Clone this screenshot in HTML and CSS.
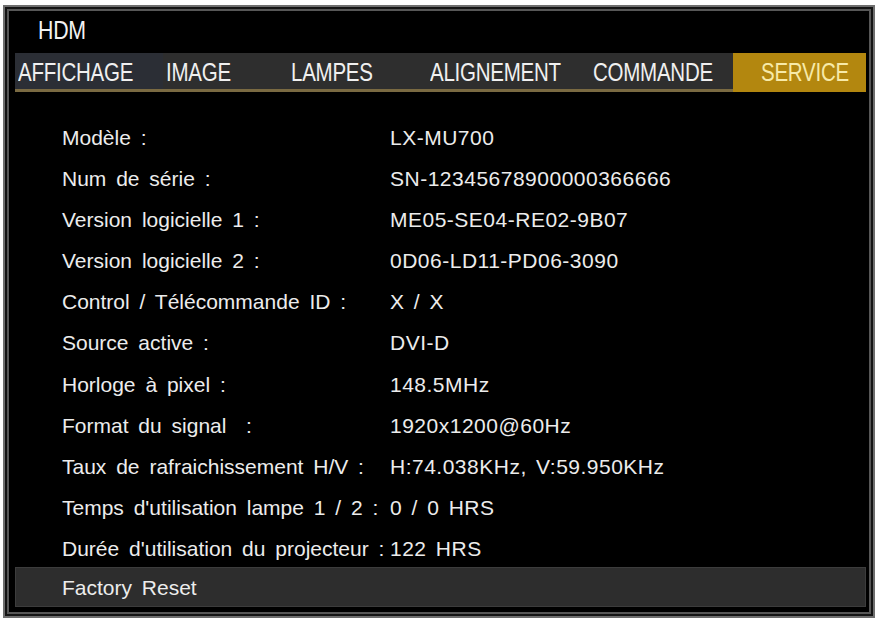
FILE: index.html
```html
<!DOCTYPE html>
<html lang="fr">
<head>
<meta charset="utf-8">
<title>SERVICE</title>
<link rel="stylesheet" href="styles.css">
</head>
<body>
<div class="frame">
  <div class="screen">
    <div class="header"><span class="narrow">HDM</span></div>
    <div class="tabs">
      <div class="tab t1"><span class="narrow">AFFICHAGE</span></div>
      <div class="tab t2"><span class="narrow">IMAGE</span></div>
      <div class="tab t3"><span class="narrow">LAMPES</span></div>
      <div class="tab t4"><span class="narrow">ALIGNEMENT</span></div>
      <div class="tab t5"><span class="narrow">COMMANDE</span></div>
      <div class="tab t6 active"><span class="narrow">SERVICE</span></div>
    </div>
    <div class="list">
      <div class="row"><span class="label">Modèle :</span><span class="value">LX-MU700</span></div>
      <div class="row"><span class="label">Num de série :</span><span class="value">SN-12345678900000366666</span></div>
      <div class="row"><span class="label">Version logicielle 1 :</span><span class="value">ME05-SE04-RE02-9B07</span></div>
      <div class="row"><span class="label">Version logicielle 2 :</span><span class="value">0D06-LD11-PD06-3090</span></div>
      <div class="row"><span class="label">Control / Télécommande ID :</span><span class="value">X / X</span></div>
      <div class="row"><span class="label">Source active :</span><span class="value">DVI-D</span></div>
      <div class="row"><span class="label">Horloge à pixel :</span><span class="value">148.5MHz</span></div>
      <div class="row"><span class="label">Format du signal &nbsp;:</span><span class="value">1920x1200@60Hz</span></div>
      <div class="row"><span class="label">Taux de rafraichissement H/V :</span><span class="value">H:74.038KHz, V:59.950KHz</span></div>
      <div class="row"><span class="label">Temps d'utilisation lampe 1 / 2 :</span><span class="value">0 / 0 HRS</span></div>
      <div class="row"><span class="label">Durée d'utilisation du projecteur :</span><span class="value">122 HRS</span></div>
    </div>
    <div class="reset">Factory Reset</div>
  </div>
</div>
</body>
</html>
```
FILE: styles.css
```css
html, body {
  margin: 0;
  padding: 0;
  background: #ffffff;
}

.frame {
  box-sizing: border-box;
  margin: 5px 0 0 3px;
  width: 872px;
  height: 613px;
  border: 2px solid #6e6e6e;
  padding: 2px;
  background: #141414;
}

.screen {
  box-sizing: border-box;
  height: 100%;
  border: 2px solid #575757;
  background: #000000;
  color: #ececec;
  font-family: "Liberation Sans", Arial, sans-serif;
  overflow: hidden;
}

.narrow {
  display: inline-block;
  transform: scaleX(0.82);
  transform-origin: left center;
  letter-spacing: -0.3px;
}

.header {
  height: 42px;
  padding-left: 29px;
  font-size: 26px;
  line-height: 38px;
  color: #f2f2f2;
  white-space: nowrap;
}

.tabs {
  display: flex;
  margin-left: 6px;
  width: 851px;
  height: 39px;
}

.tab {
  box-sizing: border-box;
  height: 39px;
  padding-left: 3px;
  padding-top: 3px;
  background: #2e2e2e;
  border-bottom: 3px solid #7a6a42;
  font-size: 25px;
  line-height: 33px;
  color: #f0f0f0;
  white-space: nowrap;
  overflow: hidden;
}

.t1 { width: 148px; background: #2b2e35; }
.t2 { width: 125px; }
.t3 { width: 139px; }
.t4 { width: 163px; }
.t5 { width: 143px; }
.t6 { width: 133px; padding-left: 28px; }

.tab.active {
  background: #b3870f;
  border-bottom-color: #b3870f;
  color: #f7eaa8;
}

.list {
  margin-top: 24.5px;
}

.row {
  display: grid;
  grid-template-columns: 328px 1fr;
  padding-left: 53px;
  height: 41.2px;
  font-size: 21px;
  line-height: 41.2px;
  white-space: nowrap;
}

.label {
  word-spacing: 4px;
}

.value {
  letter-spacing: 0.5px;
  word-spacing: 3px;
}

.reset {
  box-sizing: border-box;
  margin: -3px 3px 0 6px;
  height: 40px;
  padding-left: 46px;
  padding-top: 3px;
  background: #2d2d2d;
  border: 1px solid #3c3c3c;
  font-size: 21px;
  line-height: 34px;
  word-spacing: 4px;
}
```
